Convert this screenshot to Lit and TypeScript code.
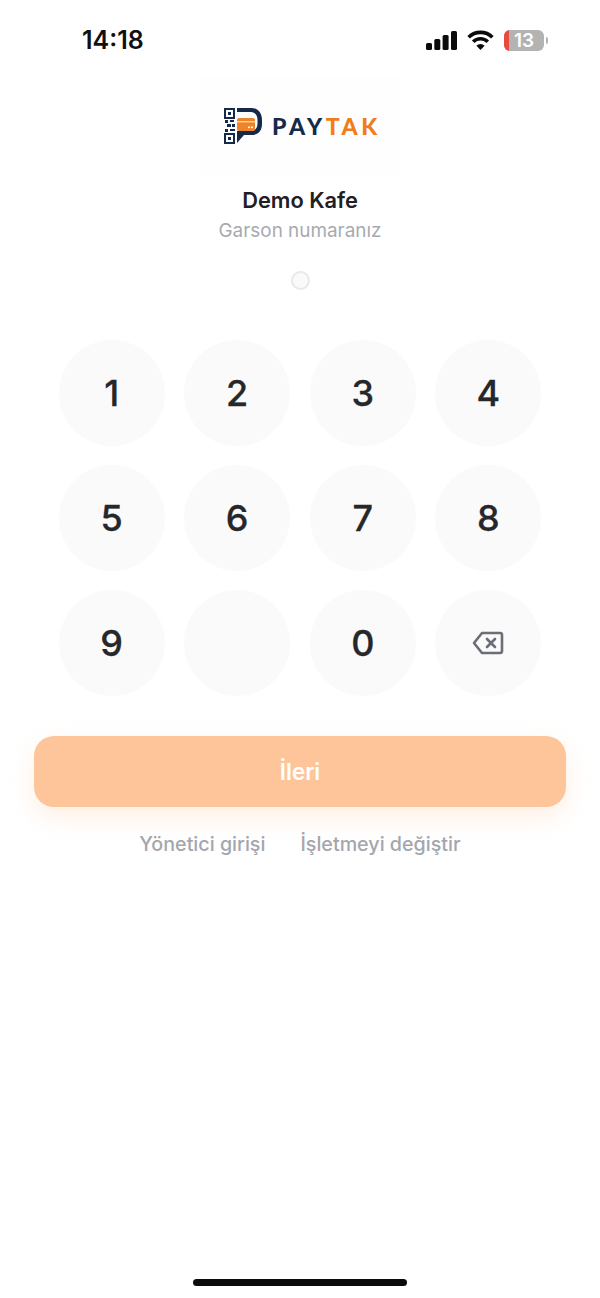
import { LitElement, html, css } from "lit";
import { customElement } from "lit/decorators.js";

const KEYS = ["1", "2", "3", "4", "5", "6", "7", "8", "9", "", "0", "del"];

@customElement("app-root")
export class AppRoot extends LitElement {
  static styles = css`
    :host {
      display: block;
      width: 600px;
      height: 1298px;
      background: #fff;
      font-family: Inter, "Liberation Sans", sans-serif;
      color: #1f2023;
    }

    .page {
      display: flex;
      flex-direction: column;
      height: 1298px;
      overflow: hidden;
    }

    .status {
      display: flex;
      justify-content: space-between;
      align-items: center;
      height: 28px;
      margin-top: 26px;
      padding: 0 52px 0 82px;
    }

    .time {
      font-size: 25px;
      font-weight: 600;
      color: #111;
    }

    .status-icons {
      display: flex;
      align-items: center;
      gap: 10px;
    }

    .battery {
      display: flex;
      align-items: center;
      gap: 2px;
    }

    .battery-body {
      position: relative;
      width: 40px;
      height: 21px;
      border-radius: 6px;
      overflow: hidden;
      background: #b3b3b3;
      display: flex;
      align-items: center;
      justify-content: center;
      font-size: 19px;
      font-weight: 600;
      color: #fff;
    }

    .battery-level {
      position: absolute;
      left: 0;
      top: 0;
      bottom: 0;
      width: 5px;
      background: #ea4a3c;
    }

    .battery-tip {
      width: 2px;
      height: 7px;
      border-radius: 0 2px 2px 0;
      background: #b3b3b3;
    }

    .logo {
      display: flex;
      align-items: center;
      justify-content: center;
      gap: 9px;
      box-sizing: border-box;
      width: 200px;
      height: 100px;
      margin: 22px auto 0;
      padding-left: 5px;
      background: #fefefe;
    }

    .wordmark {
      font-family: Lato, "Liberation Sans", sans-serif;
      font-size: 23px;
      font-weight: 900;
      letter-spacing: 3.6px;
      color: #15294b;
    }

    .wordmark span {
      color: #f07d1a;
    }

    .title {
      margin-top: 10px;
      text-align: center;
      font-size: 21.8px;
      line-height: 28px;
      font-weight: 600;
    }

    .subtitle {
      margin-top: 4px;
      text-align: center;
      font-size: 18.9px;
      line-height: 26px;
      color: #a7aab0;
    }

    .dot {
      width: 15px;
      height: 15px;
      margin: 27px auto 0;
      border: 2px solid #e8e9eb;
      border-radius: 50%;
      background: #fafafa;
    }

    .keypad {
      display: grid;
      grid-template-columns: repeat(4, 106px);
      justify-content: center;
      row-gap: 19px;
      column-gap: 19.6px;
      margin-top: 50px;
    }

    .key {
      display: flex;
      align-items: center;
      justify-content: center;
      height: 106px;
      border-radius: 50%;
      background: #fafafa;
      color: #26272a;
      font-size: 36px;
      font-weight: 500;
      -webkit-text-stroke: 0.3px #26272a;
    }

    .next {
      display: flex;
      align-items: center;
      justify-content: center;
      height: 71px;
      margin: 40px 34px 0;
      border-radius: 20px;
      background: #fec59b;
      box-shadow: 0 10px 24px rgba(254, 197, 155, 0.28);
      color: #fff;
      font-size: 22.5px;
      font-weight: 600;
    }

    .links {
      display: flex;
      justify-content: center;
      gap: 35px;
      margin-top: 24px;
      font-size: 19.7px;
      line-height: 27px;
      font-weight: 500;
      color: #a3a6ae;
    }

    .home {
      width: 214px;
      height: 7px;
      margin: auto auto 12px;
      border-radius: 4px;
      background: #0b0b0b;
    }
  `;

  private renderKey(key: string) {
    if (key === "del") {
      return html`<div class="key">
        <svg width="32" height="24" viewBox="0 0 32 24" fill="none" stroke="#6b6e76" stroke-width="2.6" stroke-linejoin="round" stroke-linecap="round">
          <path d="M10 2H28a2 2 0 0 1 2 2V20a2 2 0 0 1-2 2H10L2 12Z" />
          <path d="M15 8l8 8M23 8l-8 8" />
        </svg>
      </div>`;
    }
    return html`<div class="key">${key}</div>`;
  }

  render() {
    return html`
      <div class="page">
        <div class="status">
          <span class="time">14:18</span>
          <div class="status-icons">
            <svg width="31" height="19" viewBox="0 0 31 19" fill="#0b0b0b">
              <rect x="0" y="12" width="6" height="7" rx="1.5" />
              <rect x="8.3" y="8" width="6" height="11" rx="1.5" />
              <rect x="16.6" y="4" width="6" height="15" rx="1.5" />
              <rect x="25" y="0" width="6" height="19" rx="1.5" />
            </svg>
            <svg width="27" height="20" viewBox="0 0 27 20" fill="none" stroke="#0b0b0b" stroke-width="3.6">
              <path d="M1.6 7.2a17 17 0 0 1 23.8 0" />
              <path d="M6.2 11.8a10.4 10.4 0 0 1 14.6 0" />
              <path d="M13.5 20L9.4 15.7a5.8 5.8 0 0 1 8.2 0Z" fill="#0b0b0b" stroke="none" />
            </svg>
            <div class="battery">
              <div class="battery-body"><div class="battery-level"></div>13</div>
              <div class="battery-tip"></div>
            </div>
          </div>
        </div>

        <div class="logo">
          <svg width="39" height="36" viewBox="0 0 39 36">
            <g fill="none" stroke="#15294b" stroke-width="2">
              <rect x="1" y="1" width="9" height="9" />
              <rect x="1" y="26" width="9" height="9" />
            </g>
            <g fill="#15294b">
              <rect x="4" y="4" width="3" height="3" />
              <rect x="4" y="29" width="3" height="3" />
              <rect x="1" y="12" width="3" height="3" />
              <rect x="6" y="12" width="4" height="2" />
              <rect x="3" y="16" width="4" height="3" />
              <rect x="8" y="16" width="3" height="3" />
              <rect x="1" y="21" width="3" height="3" />
              <rect x="6" y="21" width="5" height="2" />
              <path d="M13 0H27C34 0 38 5 38 12V16C38 23 34 27 27 27H20L13 35V23H27C31 23 33.5 20 33.5 16V12C33.5 7 31 4 27 4H13Z" />
            </g>
            <rect x="13" y="10" width="18" height="13" rx="2" fill="#ee8427" />
            <rect x="13" y="13" width="18" height="1.4" fill="#fbd3ae" />
            <rect x="24" y="18.5" width="2" height="1.6" fill="#fff" />
            <rect x="27" y="18.5" width="2" height="1.6" fill="#fff" />
          </svg>
          <div class="wordmark">PAY<span>TAK</span></div>
        </div>

        <div class="title">Demo Kafe</div>
        <div class="subtitle">Garson numaranız</div>
        <div class="dot"></div>

        <div class="keypad">${KEYS.map((k) => this.renderKey(k))}</div>

        <div class="next">İleri</div>

        <div class="links">
          <span>Yönetici girişi</span>
          <span>İşletmeyi değiştir</span>
        </div>

        <div class="home"></div>
      </div>
    `;
  }
}
